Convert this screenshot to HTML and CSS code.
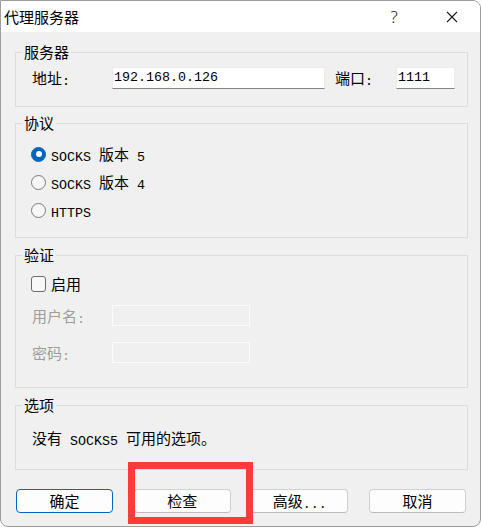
FILE: index.html
```html
<!DOCTYPE html>
<html lang="zh-CN">
<head>
<meta charset="utf-8">
<title>代理服务器</title>
<link rel="stylesheet" href="styles.css">
</head>
<body>
<div class="window">
  <div class="titlebar">
    <div class="title">代理服务器</div>
    <div class="help">?</div>
    <div class="close">
      <svg width="12" height="12" viewBox="0 0 12 12"><path d="M1 1 L11 11 M11 1 L1 11" stroke="#1a1a1a" stroke-width="1.1" fill="none"/></svg>
    </div>
  </div>
  <div class="content">
    <fieldset class="group g-server">
      <legend>服务器</legend>
      <div class="row">
        <span class="lbl w80">地址<span class="en">:</span></span>
        <div class="input addr"><span class="en">192.168.0.126</span></div>
        <span class="lbl w61 port-lbl">端口<span class="en">:</span></span>
        <div class="input port"><span class="en">1111</span></div>
      </div>
    </fieldset>

    <fieldset class="group g-proto">
      <legend>协议</legend>
      <div class="opt"><span class="radio on"></span><span class="opt-text"><span class="en">SOCKS </span>版本<span class="en"> 5</span></span></div>
      <div class="opt"><span class="radio"></span><span class="opt-text"><span class="en">SOCKS </span>版本<span class="en"> 4</span></span></div>
      <div class="opt"><span class="radio"></span><span class="opt-text"><span class="en">HTTPS</span></span></div>
    </fieldset>

    <fieldset class="group g-auth">
      <legend>验证</legend>
      <div class="opt"><span class="check"></span><span class="opt-text">启用</span></div>
      <div class="row dis user">
        <span class="lbl w80">用户名<span class="en">:</span></span>
        <div class="input off"></div>
      </div>
      <div class="row dis pass">
        <span class="lbl w80">密码<span class="en">:</span></span>
        <div class="input off"></div>
      </div>
    </fieldset>

    <fieldset class="group g-opts">
      <legend>选项</legend>
      <div class="note">没有<span class="en"> SOCKS5 </span>可用的选项。</div>
    </fieldset>

    <div class="buttons">
      <div class="btn default"><span class="btn-text">确定</span></div>
      <div class="btn"><span class="btn-text">检查</span></div>
      <div class="btn"><span class="btn-text">高级<span class="en">...</span></span></div>
      <div class="btn"><span class="btn-text">取消</span></div>
    </div>
  </div>
</div>
<div class="highlight"></div>
</body>
</html>
```
FILE: styles.css
```css
html, body {
  margin: 0;
  padding: 0;
  background: #ffffff;
}
body {
  width: 482px;
  height: 528px;
  overflow: hidden;
  font-family: "Noto Sans CJK SC", "Noto Sans", sans-serif;
  font-size: 15px;
  color: #000;
}
.en {
  font-family: "Liberation Mono", "DejaVu Sans Mono", monospace;
  font-size: 13.33px;
  line-height: 0;
  vertical-align: -1px;
}
.window {
  box-sizing: border-box;
  width: 481px;
  height: 527px;
  border: 1px solid #9c9c9c;
  border-radius: 0 8px 8px 8px;
  overflow: hidden;
  background: #f0f0f0;
}
.titlebar {
  height: 31px;
  background: #ffffff;
  display: flex;
  align-items: center;
  padding: 0 5px 0 3px;
}
.title {
  flex: 1;
  line-height: 31px;
}
.help {
  width: 46px;
  text-align: center;
  margin-right: 12px;
  font-family: "Noto Sans", sans-serif;
  font-size: 17px;
  font-weight: 300;
  color: #1a1a1a;
  line-height: 31px;
}
.close {
  width: 46px;
  height: 31px;
  display: flex;
  align-items: center;
  justify-content: center;
}
.content {
  padding: 12px 12px 0 14px;
}
.group {
  box-sizing: border-box;
  width: 453px;
  margin: 0;
  border: 1px solid #dcdcdc;
  min-width: 0;
}
.group legend {
  padding: 0 2px;
  height: 16px;
  line-height: 16px;
  margin: 0;
}
.g-server { padding: 7px 6px 17px 6px; }
.g-proto  { padding: 9px 6px 13px 6px; margin-top: 8px; }
.g-auth   { padding: 7px 6px 24px 6px; margin-top: 9px; }
.g-opts   { padding: 15px 6px 21px 6px; margin-top: 9px; }

.row {
  display: flex;
  align-items: center;
  padding-left: 10px;
}
.lbl {
  white-space: nowrap;
  height: 20px;
  line-height: 20px;
}
.w80 { width: 80px; }
.w61 { width: 61px; }
.port-lbl { margin-left: 10px; }
.input {
  box-sizing: border-box;
  height: 22px;
  background: #ffffff;
  border: 1px solid #ebebeb;
  border-bottom-color: #858585;
  padding-left: 1px;
  display: flex;
  align-items: center;
}
.input .en { line-height: 20px; vertical-align: baseline; }
.addr { width: 213px; }
.port { width: 59px; }
.input.off {
  width: 138px;
  height: 21px;
  background: #f0f0f0;
  border: 1px solid #fbfbfb;
}
.dis .lbl { color: #9d9d9d; }
.user { margin-top: 7px; }
.pass { margin-top: 16px; }

.opt {
  height: 28px;
  display: flex;
  align-items: center;
  padding-left: 9px;
}
.opt-text {
  margin-left: 5px;
  height: 20px;
  line-height: 20px;
  white-space: nowrap;
}
.radio {
  box-sizing: border-box;
  width: 15px;
  height: 15px;
  border-radius: 50%;
  border: 1px solid #7a7a7a;
  background: #f7f7f7;
  position: relative;
}
.radio.on {
  border-color: #0067c0;
  background: #0067c0;
}
.radio.on::after {
  content: "";
  position: absolute;
  left: 3.5px;
  top: 3.5px;
  width: 6px;
  height: 6px;
  border-radius: 50%;
  background: #ffffff;
}
.check {
  box-sizing: border-box;
  width: 15px;
  height: 16px;
  border: 1px solid #6a6a6a;
  border-radius: 3px;
  background: #f8f8f8;
}
.note {
  padding-left: 10px;
  height: 20px;
  line-height: 20px;
  white-space: nowrap;
}
.buttons {
  margin: 19px 0 0 1px;
  width: 450px;
  display: grid;
  grid-template-columns: repeat(4, 97px);
  justify-content: space-between;
}
.btn {
  box-sizing: border-box;
  height: 24px;
  background: #fdfdfd;
  border: 1px solid #d0d0d0;
  border-bottom-color: #bcbcbc;
  border-radius: 4px;
  display: flex;
  align-items: center;
  justify-content: center;
}
.btn-text {
  height: 20px;
  line-height: 20px;
  white-space: nowrap;
}
.btn.default {
  border: 1px solid #0067c0;
  box-shadow: inset 0 0 0 1px #ffffff;
}
.highlight {
  position: absolute;
  left: 128px;
  top: 462px;
  width: 125px;
  height: 62px;
  box-sizing: border-box;
  border: 7px solid #fd3b3b;
}
```
